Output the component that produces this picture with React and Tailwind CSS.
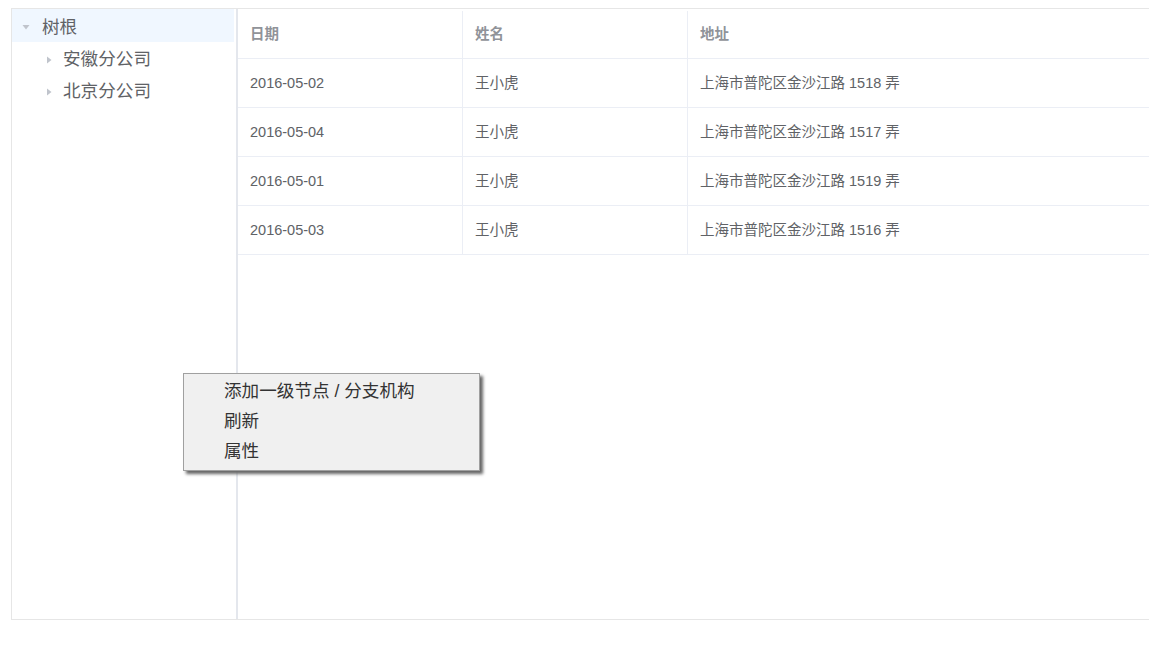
import React from "react";

const rows = [
  { date: "2016-05-02", name: "王小虎", addr: "上海市普陀区金沙江路 1518 弄" },
  { date: "2016-05-04", name: "王小虎", addr: "上海市普陀区金沙江路 1517 弄" },
  { date: "2016-05-01", name: "王小虎", addr: "上海市普陀区金沙江路 1519 弄" },
  { date: "2016-05-03", name: "王小虎", addr: "上海市普陀区金沙江路 1516 弄" },
];

function CaretDown() {
  return (
    <svg width="10" height="10" viewBox="0 0 10 10" className="shrink-0">
      <path d="M1.5 3 L8.5 3 L5 7.5 Z" fill="#c0c4cc" />
    </svg>
  );
}
function CaretRight() {
  return (
    <svg width="10" height="10" viewBox="0 0 10 10" className="shrink-0">
      <path d="M3 1.5 L7.5 5 L3 8.5 Z" fill="#c0c4cc" />
    </svg>
  );
}

export default function App() {
  return (
    <div
      className="relative w-screen h-[650px] overflow-hidden bg-white"
      style={{ fontFamily: '"Liberation Sans", "Noto Sans CJK SC", sans-serif' }}
    >
      <div className="ml-[11px] mt-[8px] flex h-[612px] w-[1200px] border border-[#e6e6e6]">
        {/* tree */}
        <div className="w-[226px] shrink-0 border-r-2 border-[#e4e7ed] text-[17.6px] text-[#606266]">
          <div className="flex h-[33px] items-center bg-[#f0f7ff] pl-[9px] pt-[3px] mr-[2px]">
            <CaretDown />
            <span className="ml-[11px]">树根</span>
          </div>
          <div className="flex h-[32px] items-center pl-[32px] pt-[3px]">
            <CaretRight />
            <span className="ml-[9px]">安徽分公司</span>
          </div>
          <div className="flex h-[32px] items-center pl-[32px] pt-[3px]">
            <CaretRight />
            <span className="ml-[9px]">北京分公司</span>
          </div>
        </div>
        {/* table */}
        <div className="flex-1 text-[14.5px]">
          <div className="flex h-[50px] border-b border-[#ebeef5] pt-[2px] font-semibold text-[#909399]">
            <div className="flex w-[225px] items-center border-r border-[#ebeef5] px-[12px]">日期</div>
            <div className="flex w-[225px] items-center border-r border-[#ebeef5] px-[12px]">姓名</div>
            <div className="flex flex-1 items-center px-[12px]">地址</div>
          </div>
          {rows.map((r, i) => (
            <div key={i} className="flex h-[49px] border-b border-[#ebeef5] text-[#606266]">
              <div className="flex w-[225px] items-center border-r border-[#ebeef5] px-[12px] pt-[2px]">{r.date}</div>
              <div className="flex w-[225px] items-center border-r border-[#ebeef5] px-[12px] pt-[2px]">{r.name}</div>
              <div className="flex flex-1 items-center px-[12px] pt-[2px]">{r.addr}</div>
            </div>
          ))}
        </div>
      </div>

      {/* context menu */}
      <div className="absolute left-[183px] top-[373px] w-[297px] h-[98px] border border-[#a0a0a0] bg-[#f0f0f0] pt-[2px] pl-[40px] text-[17.6px] text-[#333333] shadow-[3px_3px_3px_#666666]">
        <div className="h-[30px] leading-[30px]">添加一级节点 / 分支机构</div>
        <div className="h-[30px] leading-[30px]">刷新</div>
        <div className="h-[30px] leading-[30px]">属性</div>
      </div>
    </div>
  );
}
